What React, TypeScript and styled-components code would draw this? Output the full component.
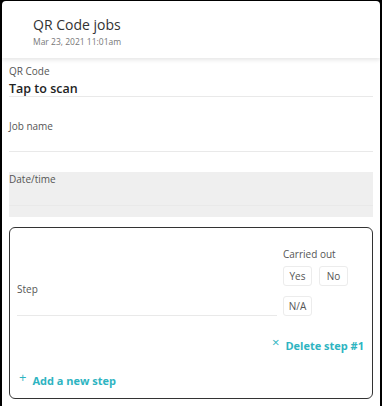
import React from 'react'
import styled, { createGlobalStyle } from 'styled-components'

const colors = {
    teal: '#2eb4c1',
    text: '#333',
    label: '#555',
    line: '#e9e9e9',
    grey: '#efefef',
}

const GlobalStyle = createGlobalStyle`
    html, body {
        margin: 0;
        padding: 0;
        background: #000;
        font-family: 'Open Sans', 'Noto Sans', sans-serif;
    }
    * { box-sizing: border-box; }
`

const Screen = styled.div`
    margin: 1px 2px 0 2px;
    background: #fff;
    border-radius: 4px 4px 0 0;
    height: 420px;
    overflow: hidden;
`

const Header = styled.div`
    height: 57px;
    padding: 14px 0 0 31px;
    box-shadow: 0 2px 4px rgba(0,0,0,0.1);
    position: relative;
    h1 {
        margin: 0;
        font-size: 14px;
        line-height: 19px;
        font-weight: 400;
        color: ${ colors.text };
    }
    small {
        display: block;
        margin-top: 2px;
        font-size: 8.5px;
        line-height: 12px;
        color: #777;
    }
`

const Body = styled.div`
    padding: 6px 7px 0 7px;
    display: flex;
    flex-direction: column;
`

const Label = styled.div`
    font-size: 10px;
    line-height: 14px;
    color: ${ colors.label };
`

const Field = styled.div<{ $gap?: number; $disabled?: boolean }>`
    margin-top: ${ p => p.$gap || 0 }px;
    background: ${ p => p.$disabled ? colors.grey : 'transparent' };
    padding-bottom: ${ p => p.$disabled ? 11 : 0 }px;
`

const Input = styled.div<{ $h: number }>`
    height: ${ p => p.$h }px;
    border-bottom: 1px solid ${ colors.line };
    font-size: 12.5px;
    font-weight: 600;
    color: #222;
    line-height: 18px;
    padding-top: 2px;
`

const StepCard = styled.div`
    margin-top: 10px;
    border: 1px solid #333;
    border-radius: 6px;
    padding: 19px 7px 10px 7px;
`

const StepRow = styled.div`
    display: flex;
    gap: 6px;
`

const StepCol = styled.div`
    flex: 1;
    display: flex;
    flex-direction: column;
    justify-content: flex-end;
`

const CarriedCol = styled.div`
    width: 82px;
`

const Options = styled.div`
    display: flex;
    flex-wrap: wrap;
    gap: 10px 7px;
    margin-top: 5px;
    width: 70px;
`

const Option = styled.div`
    width: 29px;
    height: 20px;
    border: 1px solid #ececec;
    border-radius: 3px;
    font-size: 10px;
    color: ${ colors.label };
    display: flex;
    align-items: center;
    justify-content: center;
`

const LinkButton = styled.div<{ $align?: string }>`
    display: flex;
    align-items: center;
    justify-content: ${ p => p.$align || 'flex-start' };
    gap: 6px;
    color: ${ colors.teal };
    font-size: 11px;
    font-weight: 700;
    line-height: 15px;
    span.icon {
        font-weight: 400;
        font-size: 13px;
        position: relative;
        top: -3px;
    }
`

const DeleteRow = styled(LinkButton)`
    margin-top: 22px;
    padding-right: 1px;
`

const AddRow = styled(LinkButton)`
    margin-top: 20px;
    padding-left: 2px;
`

export default function App() {
    return (
        <>
            <GlobalStyle />
            <Screen>
                <Header>
                    <h1>QR Code jobs</h1>
                    <small>Mar 23, 2021 11:01am</small>
                </Header>
                <Body>
                    <Field>
                        <Label>QR Code</Label>
                        <Input $h={19}>Tap to scan</Input>
                    </Field>
                    <Field $gap={22}>
                        <Label>Job name</Label>
                        <Input $h={19} />
                    </Field>
                    <Field $gap={20} $disabled>
                        <Label>Date/time</Label>
                        <Input $h={20} />
                    </Field>
                    <StepCard>
                        <StepRow>
                            <StepCol>
                                <Label>Step</Label>
                                <Input $h={20} />
                            </StepCol>
                            <CarriedCol>
                                <Label>Carried out</Label>
                                <Options>
                                    <Option>Yes</Option>
                                    <Option>No</Option>
                                    <Option>N/A</Option>
                                </Options>
                            </CarriedCol>
                        </StepRow>
                        <DeleteRow $align='flex-end'>
                            <span className='icon'>×</span>
                            <span>Delete step #1</span>
                        </DeleteRow>
                        <AddRow>
                            <span className='icon'>+</span>
                            <span>Add a new step</span>
                        </AddRow>
                    </StepCard>
                </Body>
            </Screen>
        </>
    )
}
